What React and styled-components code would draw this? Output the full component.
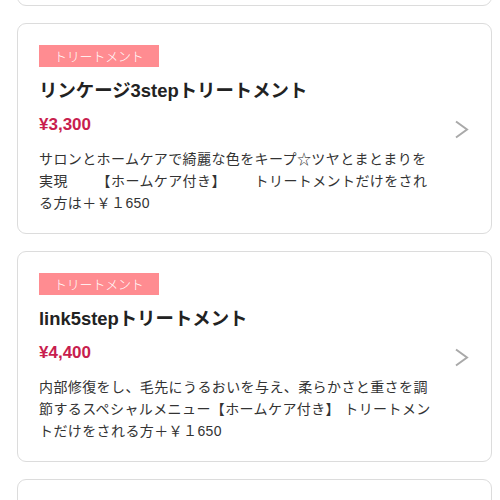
import React from "react";
import styled, { createGlobalStyle } from "styled-components";

const GlobalStyle = createGlobalStyle`
  html, body {
    margin: 0;
    padding: 0;
    background: #ffffff;
  }
  body {
    font-family: "Liberation Sans", "Noto Sans CJK JP", sans-serif;
    color: #333333;
    text-spacing-trim: space-all;
  }
`;

// fixed-size viewport, the list is scrolled a little
const Viewport = styled.div`
  width: 500px;
  height: 500px;
  overflow: hidden;
`;

const List = styled.ul`
  list-style: none;
  margin: -205px 0 0 0;
  padding: 0 8px 0 17px;
  display: flex;
  flex-direction: column;
  gap: 17px;
`;

const Card = styled.li`
  box-sizing: border-box;
  height: 211px;
  border: 1px solid #dcdcdc;
  border-radius: 9px;
  background: #fff;
  padding: 21px 22px 19px 21px;
  display: flex;
  align-items: center;
  gap: 12px;
`;

const Body = styled.div`
  flex: 1;
  min-width: 0;
  align-self: stretch;
  display: flex;
  flex-direction: column;
  align-items: flex-start;
`;

const Tag = styled.span`
  display: inline-block;
  height: 22px;
  line-height: 22px;
  padding: 0 15px;
  background: #ff8c91;
  color: #ffffff;
  font-family: "Noto Sans CJK JP", sans-serif;
  font-size: 13px;
  font-weight: 300;
  letter-spacing: -0.2px;
`;

const Title = styled.h3`
  margin: 12px 0 0;
  font-size: 18.4px;
  line-height: 23px;
  font-weight: 700;
  color: #222222;
`;

const Price = styled.div`
  margin-top: 12px;
  font-size: 17px;
  line-height: 22px;
  font-weight: 700;
  color: #c81e4e;
`;

const Desc = styled.p`
  margin: 12px 0 0;
  width: 394px;
  font-family: "Liberation Sans", "Noto Sans CJK JP", sans-serif;
  font-size: 14px;
  line-height: 22px;
  letter-spacing: 0.4px;
  color: #333333;
  text-spacing-trim: space-all;
`;

const Arrow = styled.svg`
  flex: none;
  width: 15px;
  height: 19px;
`;

const Chevron = () => (
  <Arrow viewBox="0 0 15 19">
    <polyline
      points="2,1.5 13,9.5 2,17.5"
      fill="none"
      stroke="#a9a9a9"
      strokeWidth="2"
    />
  </Arrow>
);

const menus = [
  {
    tag: "トリートメント",
    title: "髪質改善トリートメント",
    price: "¥5,500",
    desc: "ダメージの原因にアプローチし、内側から補修して指通りの良い髪へ導くトリートメントです。",
  },
  {
    tag: "トリートメント",
    title: "リンケージ3stepトリートメント",
    price: "¥3,300",
    desc: "サロンとホームケアで綺麗な色をキープ☆ツヤとまとまりを実現　　【ホームケア付き】　　トリートメントだけをされる方は＋￥１650",
  },
  {
    tag: "トリートメント",
    title: "link5stepトリートメント",
    price: "¥4,400",
    desc: "内部修復をし、毛先にうるおいを与え、柔らかさと重さを調節するスペシャルメニュー【ホームケア付き】 トリートメントだけをされる方＋￥１650",
  },
  {
    tag: "トリートメント",
    title: "酸熱トリートメント",
    price: "¥6,600",
    desc: "熱の力で髪の内部を補強し、うねりやパサつきを抑えてツヤのある仕上がりに。",
  },
];

function App() {
  return (
    <Viewport>
      <GlobalStyle />
      <List>
        {menus.map((m) => (
          <Card key={m.title}>
            <Body>
              <Tag>{m.tag}</Tag>
              <Title>{m.title}</Title>
              <Price>{m.price}</Price>
              <Desc>{m.desc}</Desc>
            </Body>
            <Chevron />
          </Card>
        ))}
      </List>
    </Viewport>
  );
}

export default App;
